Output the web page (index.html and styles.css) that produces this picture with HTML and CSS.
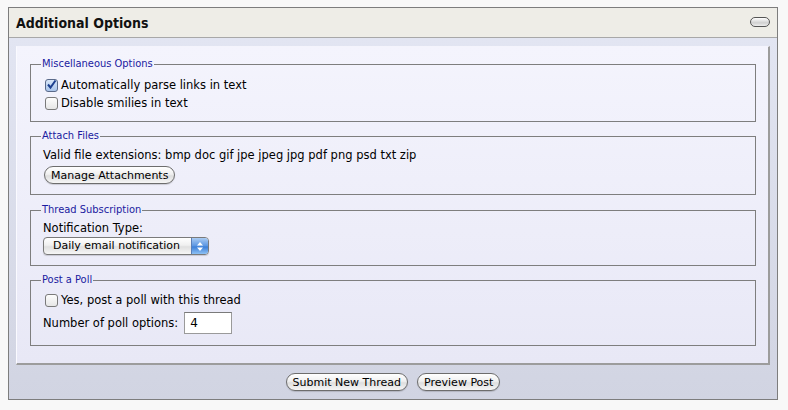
FILE: index.html
```html
<!DOCTYPE html>
<html>
<head>
<meta charset="utf-8">
<link rel="stylesheet" href="styles.css">
</head>
<body>
<div class="box">
  <div class="head">
    <span class="title">Additional Options</span>
    <span class="collapse"></span>
  </div>
  <div class="body">
    <div class="panel">
      <fieldset class="fs fs1">
        <legend>Miscellaneous Options</legend>
        <div class="row"><span class="cb checked"><svg width="13" height="13" viewBox="0 0 13 13"><path d="M3 6.5 L5.5 9.5 L10.5 2.5" fill="none" stroke="#1c3f8f" stroke-width="2"/></svg></span>Automatically parse links in text</div>
        <div class="row"><span class="cb"></span>Disable smilies in text</div>
      </fieldset>
      <fieldset class="fs fs2">
        <legend>Attach Files</legend>
        <div class="row">Valid file extensions: bmp doc gif jpe jpeg jpg pdf png psd txt zip</div>
        <div class="brow"><span class="btn">Manage Attachments</span></div>
      </fieldset>
      <fieldset class="fs fs3">
        <legend>Thread Subscription</legend>
        <div class="row">Notification Type:</div>
        <div class="select"><span class="sel-text">Daily email notification</span><span class="sel-arrow"><svg width="8" height="11" viewBox="0 0 8 11"><path d="M1 4.5 L4 1 L7 4.5 Z M1 6.5 L4 10 L7 6.5 Z" fill="#fff"/></svg></span></div>
      </fieldset>
      <fieldset class="fs fs4">
        <legend>Post a Poll</legend>
        <div class="row"><span class="cb"></span>Yes, post a poll with this thread</div>
        <div class="irow"><span>Number of poll options:</span><span class="input">4</span></div>
      </fieldset>
    </div>
    <div class="foot">
      <span class="btn">Submit New Thread</span>
      <span class="btn">Preview Post</span>
    </div>
  </div>
</div>
</body>
</html>
```
FILE: styles.css
```css
* { box-sizing: border-box; }
html, body { margin: 0; padding: 0; }
body {
  background: #f8f8f8;
  font-family: "DejaVu Sans", Verdana, sans-serif;
  font-size: 11.5px;
  color: #000;
}
.box {
  margin: 7px 0 0 8px;
  width: 770px;
  border: 1px solid #7d7d7d;
}
.head {
  height: 30px;
  background: #eeede7;
  border-bottom: 1px solid #a8a8a8;
  display: flex;
  align-items: center;
  justify-content: space-between;
  padding: 0 7px 0 7px;
}
.title {
  font-family: "DejaVu Sans Condensed", "DejaVu Sans", sans-serif;
  font-weight: bold;
  font-size: 14px;
  color: #111;
}
.collapse {
  width: 20px;
  height: 10px;
  border: 1px solid #555;
  border-radius: 5px;
  background: linear-gradient(#ffffff, #d0d0d0 60%, #eeeeee);
  margin-top: -2px;
}
.body {
  background: linear-gradient(#e2e5f2, #d1d4e2);
  padding: 8px 7px 0 7px;
}
.panel {
  width: 754px;
  border-top: 1px solid #f4f4fc;
  border-left: 1px solid #fafaff;
  border-right: 2px solid #9c9c9c;
  border-bottom: 2px solid #9c9c9c;
  background: linear-gradient(#f4f4fd, #e8e8f6);
  padding: 10px 12px 17px 13px;
}
.fs {
  margin: 0 0 8px 0;
  border: 1px solid #7e7e7e;
  padding: 0 12px 9px 12px;
  min-width: 0;
}
.fs1 { margin-bottom: 7px; }
.fs3 { margin-bottom: 7px; }
.fs4 { margin-bottom: 0; }
legend {
  font-family: "DejaVu Sans Condensed", "DejaVu Sans", sans-serif;
  font-size: 11px;
  color: #1a1aa0;
  padding: 0 1px;
  margin-left: -2px;
  line-height: 14px;
}
.row {
  display: flex;
  align-items: center;
  height: 18px;
  white-space: nowrap;
}
.fs1 .row:first-of-type { margin-top: 5px; }
.fs2 .row { margin-top: 3px; }
.fs2 { padding-bottom: 10px; }
.fs3 .row { margin-top: 2px; }
.fs3 { padding-bottom: 10px; }
.fs4 .row { margin-top: 4px; }
.fs4 { padding-bottom: 11px; }
.cb {
  width: 13px;
  height: 13px;
  border: 1px solid #7a7a7a;
  border-radius: 3px;
  background: linear-gradient(#fdfdfd, #e6e6e6);
  margin: 0 3px 0 2px;
  display: inline-flex;
  position: relative;
}
.cb svg { position: absolute; left: -1px; top: -2px; }
.cb.checked { background: linear-gradient(#d8e6f8, #a9c4ea); border-color: #5a6a8a; }
.brow { margin-top: 2px; display: flex; }
.btn {
  display: inline-flex;
  align-items: center;
  height: 18px;
  border: 1px solid #6d6d6d;
  border-radius: 9px;
  background: linear-gradient(#ffffff, #f0f0f0 45%, #dedede 55%, #f6f6f6);
  padding: 0 6px;
  font-size: 11px;
  box-shadow: 0 1px 1px rgba(0,0,0,0.15);
}
.fs2 .btn { margin-left: 1px; }
.select {
  width: 166px;
  height: 18px;
  border: 1px solid #7a7a7a;
  border-radius: 4px;
  display: flex;
  overflow: hidden;
  background: linear-gradient(#ffffff, #f0f0f0 45%, #e0e0e0 55%, #f6f6f6);
  box-shadow: 0 1px 1px rgba(0,0,0,0.15);
}
.sel-text { flex: 1; padding-left: 9px; line-height: 16px; font-size: 11px; }
.sel-arrow {
  width: 17px;
  border-left: 1px solid #5b7fb8;
  background: linear-gradient(#a9cbf3, #5a95e2 50%, #3c7fd8 55%, #8ec1f4);
  display: flex;
  align-items: center;
  justify-content: center;
}
.irow {
  margin-top: 3px;
  display: flex;
  align-items: center;
  white-space: nowrap;
}
.input {
  margin-left: 6px;
  width: 48px;
  height: 22px;
  border: 1px solid #9a9a9a;
  border-top-color: #7a7a7a;
  background: #fff;
  padding: 0 5px;
  line-height: 20px;
  font-size: 12px;
}
.foot {
  display: flex;
  justify-content: center;
  gap: 9px;
  padding: 8px 0 8px 0;
  margin-left: -7px;
  margin-right: -7px;
}
```
